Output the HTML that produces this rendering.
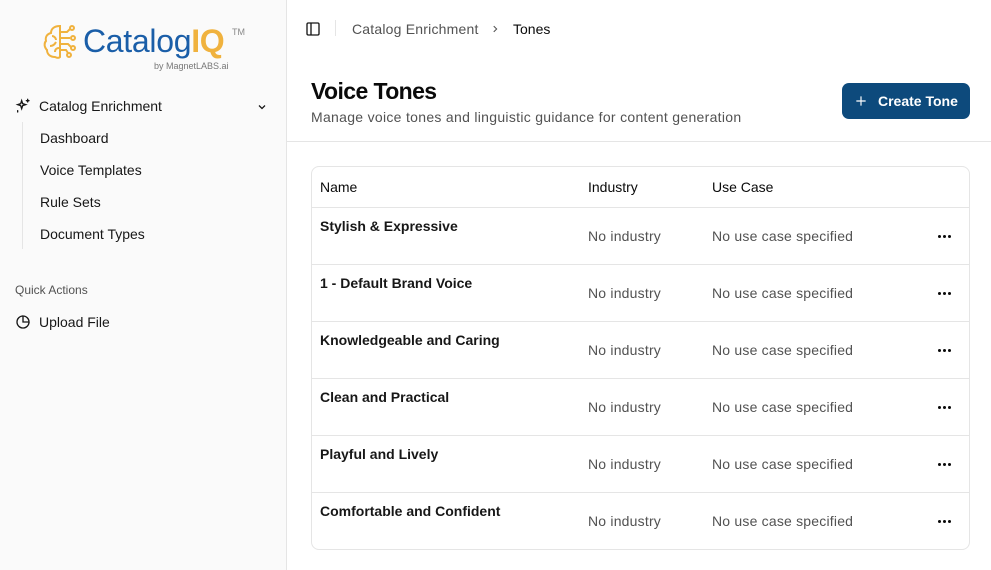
<!DOCTYPE html>
<html><head><meta charset="utf-8"><style>
*{box-sizing:border-box;margin:0;padding:0}
body{width:991px;height:570px;overflow:hidden;font-family:"Liberation Sans",sans-serif;background:#fff;color:#0a0a0a;position:relative}
.side{position:absolute;left:0;top:0;width:287px;height:570px;background:#fafafa;border-right:1px solid #e5e5e5}
.abs{position:absolute;white-space:nowrap}
.nav{font-size:14px;color:#171717}
.tbl{position:absolute;left:311px;top:166px;width:659px;height:384px;border:1px solid #e5e5e5;border-radius:8px;overflow:hidden}
.row{position:absolute;left:0;width:657px;height:57px;border-top:1px solid #e5e5e5}
.row .n{position:absolute;left:8px;top:10px;font-size:14px;font-weight:bold;color:#171717}
.row .i{position:absolute;left:276px;top:20px;font-size:14px;color:#525252;letter-spacing:0.2px}
.row .u{position:absolute;left:400px;top:20px;font-size:14px;color:#525252;letter-spacing:0.2px}
.dots{position:absolute;left:626px;top:27px;width:14px;height:3px}
.dots i{position:absolute;top:0;width:3px;height:3px;border-radius:50%;background:#0a0a0a}
</style></head><body>
<div class="side">
 <svg class="abs" style="left:42px;top:22px" width="40" height="40" viewBox="0 0 40 40" fill="none" stroke="#f0b23e" stroke-width="2"><path d="M18 4c-6 0-9 3-9 7-4 1-6 4-5 8-2 2-2 6 1 9 0 4 3 7 8 7 2 1 4 1 5 0z"/><path d="M10 14c2 0 4 2 4 4M8 24c3 0 5-2 6-4M13 30c0-3 2-4 4-4"/><path d="M18 10h7l3-3M18 16h10M18 22h8l3 3M18 28h6l2 3"/><circle cx="30" cy="6" r="2"/><circle cx="31" cy="16" r="2"/><circle cx="31" cy="26" r="2"/><circle cx="27" cy="33" r="2"/></svg>
 <div class="abs" style="left:83px;top:23px;font-size:32px;color:#1a5ea8;letter-spacing:-0.3px">Catalog<span style="color:#f0b23e;font-weight:bold">IQ</span></div>
 <div class="abs" style="left:232px;top:27px;font-size:9px;color:#888">TM</div>
 <div class="abs" style="left:154px;top:61px;font-size:9px;color:#777">by MagnetLABS.ai</div>
 <svg class="abs" style="left:15px;top:98px" width="16" height="16" viewBox="0 0 24 24" fill="none" stroke="#171717" stroke-width="2" stroke-linecap="round"><path d="M10 4l1.5 4.5L16 10l-4.5 1.5L10 16l-1.5-4.5L4 10l4.5-1.5z"/><path d="M19 2v4M17 4h4M4 19v2"/></svg>
 <div class="abs nav" style="left:39px;top:98px">Catalog Enrichment</div>
 <svg class="abs" style="left:256px;top:101px" width="12" height="12" viewBox="0 0 24 24" fill="none" stroke="#171717" stroke-width="2.5"><path d="M6 9l6 6 6-6"/></svg>
 <div class="abs" style="left:22px;top:122px;width:1px;height:127px;background:#e5e5e5"></div>
 <div class="abs nav" style="left:40px;top:130px">Dashboard</div>
 <div class="abs nav" style="left:40px;top:162px">Voice Templates</div>
 <div class="abs nav" style="left:40px;top:194px">Rule Sets</div>
 <div class="abs nav" style="left:40px;top:226px">Document Types</div>
 <div class="abs" style="left:15px;top:283px;font-size:12px;color:#525252">Quick Actions</div>
 <svg class="abs" style="left:15px;top:314px" width="16" height="16" viewBox="0 0 24 24" fill="none" stroke="#171717" stroke-width="2"><path d="M21 12a9 9 0 1 1-9-9"/><path d="M12 3a9 9 0 0 1 9 9h-9z"/></svg>
 <div class="abs nav" style="left:39px;top:314px">Upload File</div>
</div>
<svg class="abs" style="left:305px;top:21px" width="16" height="16" viewBox="0 0 24 24" fill="none" stroke="#171717" stroke-width="2"><rect x="3" y="3" width="18" height="18" rx="2"/><path d="M9 3v18"/></svg>
<div class="abs" style="left:335px;top:20px;width:1px;height:16px;background:#e5e5e5"></div>
<div class="abs" style="left:352px;top:21px;font-size:14px;color:#525252;letter-spacing:0.2px">Catalog Enrichment</div>
<svg class="abs" style="left:490px;top:24px" width="10" height="10" viewBox="0 0 24 24" fill="none" stroke="#525252" stroke-width="2.5"><path d="M9 5l7 7-7 7"/></svg>
<div class="abs" style="left:513px;top:21px;font-size:14px;color:#0a0a0a">Tones</div>
<div class="abs" style="left:311px;top:78px;font-size:23px;font-weight:bold;letter-spacing:-0.6px">Voice Tones</div>
<div class="abs" style="left:311px;top:109px;font-size:14px;color:#525252;letter-spacing:0.3px">Manage voice tones and linguistic guidance for content generation</div>
<div class="abs" style="left:842px;top:83px;width:128px;height:36px;background:#0d4a7c;border-radius:7px;color:#fff;font-size:14px;font-weight:bold;padding:10px 0 0 36px">Create Tone</div>
<svg class="abs" style="left:854px;top:94px" width="14" height="14" viewBox="0 0 24 24" stroke="#fff" stroke-width="2"><path d="M12 4v16M4 12h16"/></svg>
<div class="abs" style="left:287px;top:141px;width:704px;height:1px;background:#e5e5e5"></div>
<div class="tbl">
 <div class="abs" style="left:8px;top:12px;font-size:14px">Name</div>
 <div class="abs" style="left:276px;top:12px;font-size:14px">Industry</div>
 <div class="abs" style="left:400px;top:12px;font-size:14px">Use Case</div>
 <div class="row" style="top:40px"><div class="n">Stylish &amp; Expressive</div><div class="i">No industry</div><div class="u">No use case specified</div><div class="dots"><i style="left:0"></i><i style="left:5px"></i><i style="left:10px"></i></div></div>
 <div class="row" style="top:97px"><div class="n">1 - Default Brand Voice</div><div class="i">No industry</div><div class="u">No use case specified</div><div class="dots"><i style="left:0"></i><i style="left:5px"></i><i style="left:10px"></i></div></div>
 <div class="row" style="top:154px"><div class="n">Knowledgeable and Caring</div><div class="i">No industry</div><div class="u">No use case specified</div><div class="dots"><i style="left:0"></i><i style="left:5px"></i><i style="left:10px"></i></div></div>
 <div class="row" style="top:211px"><div class="n">Clean and Practical</div><div class="i">No industry</div><div class="u">No use case specified</div><div class="dots"><i style="left:0"></i><i style="left:5px"></i><i style="left:10px"></i></div></div>
 <div class="row" style="top:268px"><div class="n">Playful and Lively</div><div class="i">No industry</div><div class="u">No use case specified</div><div class="dots"><i style="left:0"></i><i style="left:5px"></i><i style="left:10px"></i></div></div>
 <div class="row" style="top:325px"><div class="n">Comfortable and Confident</div><div class="i">No industry</div><div class="u">No use case specified</div><div class="dots"><i style="left:0"></i><i style="left:5px"></i><i style="left:10px"></i></div></div>
</div>
</body></html>
